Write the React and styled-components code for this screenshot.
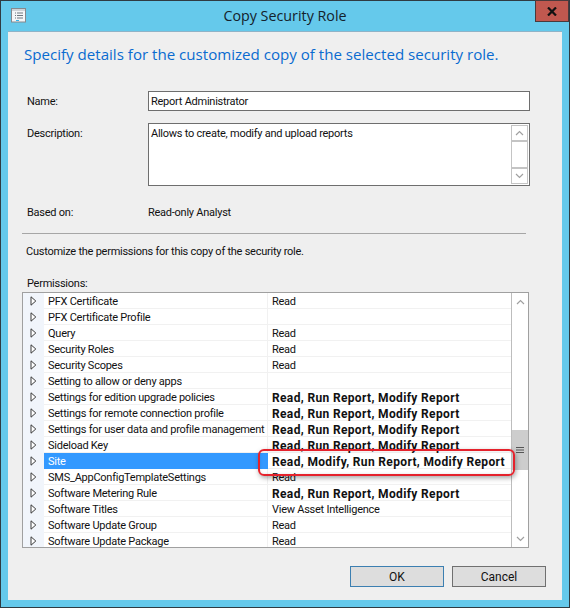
import React from 'react';
import styled, { createGlobalStyle } from 'styled-components';

const rows = [
    { name: 'PFX Certificate', value: 'Read' },
    { name: 'PFX Certificate Profile', value: '' },
    { name: 'Query', value: 'Read' },
    { name: 'Security Roles', value: 'Read' },
    { name: 'Security Scopes', value: 'Read' },
    { name: 'Setting to allow or deny apps', value: '' },
    { name: 'Settings for edition upgrade policies', value: 'Read, Run Report, Modify Report', bold: true },
    { name: 'Settings for remote connection profile', value: 'Read, Run Report, Modify Report', bold: true },
    { name: 'Settings for user data and profile management', value: 'Read, Run Report, Modify Report', bold: true },
    { name: 'Sideload Key', value: 'Read, Run Report, Modify Report', bold: true },
    { name: 'Site', value: 'Read, Modify, Run Report, Modify Report', bold: true, selected: true },
    { name: 'SMS_AppConfigTemplateSettings', value: 'Read' },
    { name: 'Software Metering Rule', value: 'Read, Run Report, Modify Report', bold: true },
    { name: 'Software Titles', value: 'View Asset Intelligence' },
    { name: 'Software Update Group', value: 'Read' },
    { name: 'Software Update Package', value: 'Read' },
];

const GlobalStyle = createGlobalStyle`
    html, body {
        margin: 0;
        padding: 0;
    }
    body {
        font-family: 'Roboto', sans-serif;
        font-size: 11px;
        letter-spacing: -0.25px;
        color: #111;
    }
`;

const Window = styled.div`
    width: 570px;
    height: 608px;
    box-sizing: border-box;
    display: flex;
    flex-direction: column;
    background: #65c9eb;
    border: 1px solid #2f3b42;
    padding: 0 7px 7px;
`;

const TitleBar = styled.div`
    height: 30px;
    flex: none;
    display: grid;
    grid-template-columns: 1fr auto 1fr;
    align-items: start;
    margin-right: -7px;
    box-sizing: border-box;
`;

const AppIcon = styled.svg`
    width: 15px;
    height: 15px;
    margin: 7px 0 0 3px;
`;

const Title = styled.div`
    font-family: 'Open Sans', sans-serif;
    font-size: 14.3px;
    letter-spacing: 0;
    line-height: 30px;
    color: #14222b;
    padding-right: 7px;
`;

const CloseButton = styled.div`
    justify-self: end;
    width: 34px;
    height: 22px;
    margin-top: -1px;
    box-sizing: border-box;
    background: #c0584f;
    border: 1px solid #4a3a3c;
    display: flex;
    align-items: center;
    justify-content: center;
`;

const Client = styled.div`
    flex: 1;
    background: #efefef;
    border-top: 1px solid #8fb3c7;
    display: flex;
    flex-direction: column;
    padding: 0 16px 0 14px;
    min-height: 0;
`;

const Heading = styled.h1`
    margin: 11px 0 0 2px;
    font-family: 'Open Sans', sans-serif;
    font-size: 15.1px;
    letter-spacing: 0;
    line-height: 22px;
    font-weight: 400;
    color: #0a6bd0;
`;

const FieldRow = styled.div`
    display: flex;
    align-items: flex-start;
    margin-top: ${(p) => p.$top}px;
    padding-left: 5px;
`;

const Label = styled.div`
    width: 121px;
    flex: none;
    line-height: 16px;
    padding-top: ${(p) => p.$pad || 0}px;
`;

const TextInput = styled.div`
    width: 382px;
    height: 20px;
    box-sizing: border-box;
    background: #fff;
    border: 1px solid #6e6e6e;
    padding: 1px 0 0 2px;
    line-height: 18px;
`;

const TextArea = styled(TextInput)`
    height: 63px;
    display: flex;
    justify-content: space-between;
    line-height: 18px;
    padding: 1px 1px 1px 2px;
`;

const MiniScroll = styled.div`
    width: 17px;
    flex: none;
    display: flex;
    flex-direction: column;
    justify-content: space-between;
    border: 1px solid #c4c4c4;
    box-sizing: border-box;
    background: #fff;
`;

const ScrollButton = styled.div`
    height: ${(p) => p.$h || 16}px;
    background: #fff;
    box-sizing: border-box;
    display: flex;
    align-items: center;
    justify-content: center;
    border-bottom: ${(p) => (p.$edge === 'top' ? '2px solid #c4c4c4' : '0')};
    border-top: ${(p) => (p.$edge === 'bottom' ? '2px solid #c4c4c4' : '0')};
`;

const StaticValue = styled.div`
    line-height: 16px;
`;

const Separator = styled.hr`
    width: 504px;
    height: 1px;
    margin: 12px 0 0 0;
    border: 0;
    background: #a6a6a6;
`;

const Hint = styled.div`
    margin: 10px 0 0 4px;
    line-height: 16px;
`;

const ListLabel = styled.div`
    margin: 16px 0 0 5px;
    line-height: 16px;
`;

const ListBox = styled.div`
    position: relative;
    width: 507px;
    height: 256px;
    box-sizing: border-box;
    border: 1px solid #a0a0a0;
    background: #fff;
    display: flex;
`;

const RowList = styled.div`
    flex: 1;
    overflow: hidden;
`;

const Row = styled.div`
    display: grid;
    grid-template-columns: 21px 224px 1fr;
    height: 16px;
    line-height: 18px;
`;

const Expander = styled.div`
    background: #f1f5fb;
    display: flex;
    align-items: center;
    justify-content: center;
    padding-right: 1px;
`;

const NameCell = styled.div`
    box-sizing: border-box;
    height: 16px;
    padding-left: 4px;
    white-space: nowrap;
    background: ${(p) => (p.$selected ? '#3399ff' : '#fff')};
    color: ${(p) => (p.$selected ? '#fff' : 'inherit')};
    border-bottom: 1px solid ${(p) => (p.$selected ? '#3399ff' : '#f1f1f1')};
    border-right: 1px solid ${(p) => (p.$selected ? '#3399ff' : '#f1f1f1')};
`;

const ValueCell = styled.div`
    box-sizing: border-box;
    height: 16px;
    padding-left: 4px;
    white-space: nowrap;
    font-size: ${(p) => (p.$bold ? 12 : 11)}px;
    font-weight: ${(p) => (p.$bold ? 700 : 400)};
    letter-spacing: ${(p) => (p.$bold ? '0.35px' : 'inherit')};
    border-bottom: 1px solid #f1f1f1;
`;

const Scrollbar = styled.div`
    width: 16px;
    flex: none;
    border-left: 1px solid #bdbdbd;
    display: flex;
    flex-direction: column;
    background: #fff;
`;

const ScrollSpace = styled.div`
    height: ${(p) => p.$h}px;
    flex: ${(p) => (p.$h ? 'none' : 1)};
`;

const Thumb = styled.div`
    height: 40px;
    flex: none;
    background: #cdcdcd;
    display: flex;
    align-items: center;
    justify-content: center;
`;

const Callout = styled.div`
    position: absolute;
    left: 235px;
    top: 156px;
    width: 257px;
    height: 27px;
    box-sizing: border-box;
    border: 2px solid #e5222c;
    border-radius: 6px;
    box-shadow: 1px 2px 5px rgba(0, 0, 0, 0.35), inset 0 0 3px rgba(0, 0, 0, 0.12);
    pointer-events: none;
`;

const ButtonBar = styled.div`
    display: flex;
    justify-content: flex-end;
    gap: 8px;
    margin: 18px 0 0 0;
`;

const Button = styled.button`
    width: 94px;
    height: 21px;
    padding: 1px 0 0;
    box-sizing: border-box;
    font: inherit;
    font-size: 12px;
    letter-spacing: 0;
    color: inherit;
    background: #dddddd;
    border: ${(p) => (p.$primary ? '1px solid #3c7fb1' : '1px solid #707070')};
`;

const Chevron = ({ down }) => (
    <svg width="9" height="6" viewBox="0 0 9 6" fill="none" stroke="#a0a0a0" strokeWidth="1.2">
        <path d={down ? 'M1 1l3.5 3.5L8 1' : 'M1 5l3.5-3.5L8 5'} />
    </svg>
);

const Triangle = () => (
    <svg width="7" height="10" viewBox="0 0 7 10" fill="#fff" stroke="#3a3a3a" strokeWidth="1">
        <path d="M1 .8L5.8 5 1 9.2z" />
    </svg>
);

const App = () => {
    return (
        <Window>
            <GlobalStyle />
            <TitleBar>
                <AppIcon viewBox="0 0 15 15">
                    <rect x=".5" y=".5" width="14" height="13.5" fill="#f4f6f8" stroke="#85898e" />
                    <rect x="1" y="1" width="13" height="2" fill="#cfd3d8" />
                    <path d="M4 5h1M6 5h6M4 7.5h1M6 7.5h6M4 10h1M6 10h6" stroke="#6f7880" strokeWidth="1" />
                    <path d="M5 12.5h3" stroke="#35b4e8" strokeWidth="1" />
                </AppIcon>
                <Title>Copy Security Role</Title>
                <CloseButton>
                    <svg width="10" height="9" viewBox="0 0 10 9" stroke="#111" strokeWidth="2.2">
                        <path d="M1 .5l8 8M9 .5l-8 8" />
                    </svg>
                </CloseButton>
            </TitleBar>
            <Client>
                <Heading>Specify details for the customized copy of the selected security role.</Heading>
                <FieldRow $top={26}>
                    <Label $pad={3}>Name:</Label>
                    <TextInput>Report Administrator</TextInput>
                </FieldRow>
                <FieldRow $top={12}>
                    <Label $pad={3}>Description:</Label>
                    <TextArea>
                        <span>Allows to create, modify and upload reports</span>
                        <MiniScroll>
                            <ScrollButton $edge="top"><Chevron /></ScrollButton>
                            <ScrollButton $edge="bottom"><Chevron down /></ScrollButton>
                        </MiniScroll>
                    </TextArea>
                </FieldRow>
                <FieldRow $top={19}>
                    <Label>Based on:</Label>
                    <StaticValue>Read-only Analyst</StaticValue>
                </FieldRow>
                <Separator />
                <Hint>Customize the permissions for this copy of the security role.</Hint>
                <ListLabel>Permissions:</ListLabel>
                <ListBox>
                    <RowList>
                        {rows.map((row) => (
                            <Row key={row.name}>
                                <Expander><Triangle /></Expander>
                                <NameCell $selected={row.selected}>{row.name}</NameCell>
                                <ValueCell $bold={row.bold}>{row.value}</ValueCell>
                            </Row>
                        ))}
                    </RowList>
                    <Scrollbar>
                        <ScrollButton $h={17}><Chevron /></ScrollButton>
                        <ScrollSpace $h={120} />
                        <Thumb>
                            <svg width="8" height="8" viewBox="0 0 8 8" stroke="#555" strokeWidth="1">
                                <path d="M0 1.5h8M0 4h8M0 6.5h8" />
                            </svg>
                        </Thumb>
                        <ScrollSpace />
                        <ScrollButton $h={16}><Chevron down /></ScrollButton>
                    </Scrollbar>
                    <Callout />
                </ListBox>
                <ButtonBar>
                    <Button $primary>OK</Button>
                    <Button>Cancel</Button>
                </ButtonBar>
            </Client>
        </Window>
    );
};

export default App;
